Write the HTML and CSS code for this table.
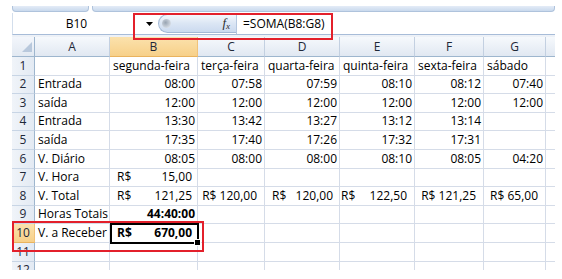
FILE: index.html
```html
<!DOCTYPE html>
<html lang="pt">
<head>
<meta charset="utf-8">
<title>Planilha</title>
<link rel="stylesheet" href="styles.css">
</head>
<body>
<div class="app">
  <div class="ribbon-edge"><div class="rtab rtab-1"></div><div class="rtab rtab-2"></div></div>
  <div class="formula-bar">
    <div class="name-box">B10</div>
    <div class="nb-drop"><svg width="7" height="4" viewBox="0 0 7 4"><path d="M0 0H7L3.5 4Z" fill="#000"/></svg></div>
    <div class="fx-pill"><span class="grip"></span><span class="fx"><i>f</i><sub>x</sub></span></div>
    <div class="formula">=SOMA(B8:G8)</div>
  </div>
  <div class="gap"></div>
  <div class="sheet">
    <div class="corner"><svg width="12" height="12" viewBox="0 0 12 12"><path d="M11 1V11H1Z" fill="#b8c8dc"/></svg></div>
    <div class="c h">A</div><div class="c h sel">B</div><div class="c h">C</div><div class="c h">D</div><div class="c h">E</div><div class="c h">F</div><div class="c h">G</div><div class="c h last"></div>

    <div class="c rh">1</div><div class="c"></div><div class="c">segunda-feira</div><div class="c">terça-feira</div><div class="c">quarta-feira</div><div class="c">quinta-feira</div><div class="c">sexta-feira</div><div class="c">sábado</div><div class="c last"></div>

    <div class="c rh">2</div><div class="c">Entrada</div><div class="c r">08:00</div><div class="c r">07:58</div><div class="c r">07:59</div><div class="c r">08:10</div><div class="c r">08:12</div><div class="c r">07:40</div><div class="c last"></div>

    <div class="c rh">3</div><div class="c">saída</div><div class="c r">12:00</div><div class="c r">12:00</div><div class="c r">12:00</div><div class="c r">12:00</div><div class="c r">12:00</div><div class="c r">12:00</div><div class="c last"></div>

    <div class="c rh">4</div><div class="c">Entrada</div><div class="c r">13:30</div><div class="c r">13:42</div><div class="c r">13:27</div><div class="c r">13:12</div><div class="c r">13:14</div><div class="c"></div><div class="c last"></div>

    <div class="c rh">5</div><div class="c">saída</div><div class="c r">17:35</div><div class="c r">17:40</div><div class="c r">17:26</div><div class="c r">17:32</div><div class="c r">17:31</div><div class="c"></div><div class="c last"></div>

    <div class="c rh">6</div><div class="c">V. Diário</div><div class="c r">08:05</div><div class="c r">08:00</div><div class="c r">08:00</div><div class="c r">08:10</div><div class="c r">08:05</div><div class="c r">04:20</div><div class="c last"></div>

    <div class="c rh">7</div><div class="c">V. Hora</div><div class="c acct"><span>R$</span><span>15,00</span></div><div class="c"></div><div class="c"></div><div class="c"></div><div class="c"></div><div class="c"></div><div class="c last"></div>

    <div class="c rh">8</div><div class="c">V. Total</div><div class="c acct"><span>R$</span><span>121,25</span></div><div class="c cur">R$ 120,00</div><div class="c acct acct-d"><span>R$</span><span>120,00</span></div><div class="c acct acct-e"><span>R$</span><span>122,50</span></div><div class="c cur">R$ 121,25</div><div class="c cur">R$ 65,00</div><div class="c last"></div>

    <div class="c rh">9</div><div class="c">Horas Totais</div><div class="c r b">44:40:00</div><div class="c"></div><div class="c"></div><div class="c"></div><div class="c"></div><div class="c"></div><div class="c last"></div>

    <div class="c rh sel">10</div><div class="c">V. a Receber</div><div class="c acct b active"><span>R$</span><span>670,00</span></div><div class="c"></div><div class="c"></div><div class="c"></div><div class="c"></div><div class="c"></div><div class="c last"></div>

    <div class="c rh">11</div><div class="c"></div><div class="c"></div><div class="c"></div><div class="c"></div><div class="c"></div><div class="c"></div><div class="c"></div><div class="c last"></div>

    <div class="c rh">12</div><div class="c"></div><div class="c"></div><div class="c"></div><div class="c"></div><div class="c"></div><div class="c"></div><div class="c"></div><div class="c last"></div>
  </div>
  <div class="hl hl-formula"></div>
  <div class="hl hl-row"></div>
</div>
</body>
</html>
```

FILE: styles.css
```css
body {
  margin: 0;
  background: #fff;
  font-family: "Open Sans", "Liberation Sans", sans-serif;
  font-size: 12px;
  color: #000;
}

.app {
  position: relative;
  margin-left: 12px;
  width: 543px;
}

.ribbon-edge {
  display: flex;
  height: 13px;
}

.rtab {
  margin-top: 6px;
  height: 5px;
  background: linear-gradient(#e4ecf7, #c9d9ed);
  border: 1px solid #afc3dc;
  border-top: 0;
  border-radius: 0 0 4px 4px;
}

.rtab-1 { width: 75px; }
.rtab-2 { flex: 1; margin-left: 3px; }

.formula-bar {
  display: flex;
  height: 22px;
  box-sizing: border-box;
  border-bottom: 1px solid #a7bcd8;
  border-left: 1px solid #d3deec;
  background: #fff;
}

.name-box {
  width: 127px;
  display: flex;
  align-items: center;
  justify-content: center;
}

.nb-drop {
  width: 18px;
  display: flex;
  align-items: center;
  justify-content: center;
}

.fx-pill {
  width: 78px;
  height: 19px;
  margin-top: 1px;
  box-sizing: border-box;
  border: 1px solid #a3b9d6;
  border-right: 0;
  border-radius: 10px 0 0 10px;
  background: linear-gradient(#f3f7fc, #dbe6f4 50%, #cbdaef);
  display: flex;
  align-items: center;
  justify-content: space-between;
  padding: 0 6px 0 3px;
}

.grip {
  width: 9px;
  height: 9px;
  border-radius: 50%;
  background: radial-gradient(circle at 40% 40%, #98a4b2, #c7cfd9 55%, #eef2f7);
}

.fx {
  font-family: "Liberation Serif", serif;
  font-size: 13px;
  color: #2b2b2b;
  line-height: 1;
}

.fx sub {
  font-size: 9px;
  font-style: italic;
  vertical-align: -2px;
}

.formula {
  flex: 1;
  border-left: 1px solid #b5c7df;
  padding-left: 6px;
  display: flex;
  align-items: center;
}

.gap {
  height: 2px;
  background: #edf1f7;
}

.sheet {
  display: grid;
  grid-template-columns: 23px 75px 88px 67px 75px 75px 69px 62px 9px;
  grid-template-rows: 20px repeat(12, 18.6px);
  height: 233px;
  overflow: hidden;
}

.c {
  box-sizing: border-box;
  border-right: 1px solid #d5dce8;
  border-bottom: 1px solid #d5dce8;
  display: flex;
  align-items: flex-end;
  padding: 0 2px 1px 3px;
  line-height: 16px;
  white-space: nowrap;
  overflow: hidden;
}

.c.last { border-right: 0; }

.corner {
  box-sizing: border-box;
  background: linear-gradient(#f3f6fb, #e2e9f2);
  border-right: 1px solid #9eb6ce;
  border-bottom: 1px solid #9eb6ce;
  display: flex;
  align-items: flex-end;
  justify-content: flex-end;
  padding: 0 1px 3px 0;
}

.h {
  background: linear-gradient(#f6f9fc, #e1e8f2);
  border-right-color: #c3d0e1;
  border-bottom-color: #9eb6ce;
  justify-content: center;
  align-items: center;
  padding: 0;
  color: #1e2838;
}

.rh {
  background: linear-gradient(90deg, #f0f4f9, #e3eaf3);
  border-right-color: #9eb6ce;
  border-bottom-color: #c8d5e5;
  justify-content: center;
  padding: 0 0 1px 0;
  color: #1e2838;
}

.sel {
  background: linear-gradient(#fbe2ad, #f7d089);
  border-right-color: #f0c27a;
  border-bottom-color: #e9b35e;
}

.r { justify-content: flex-end; }

.b { font-weight: 700; }

.acct {
  justify-content: space-between;
  padding: 0 5px 1px 7px;
}

.acct-d { padding-right: 6px; }
.acct-e { padding-left: 1px; padding-right: 7px; }

.cur {
  justify-content: flex-end;
  padding-right: 7px;
}

.active {
  position: relative;
  overflow: visible;
}

.active::before {
  content: "";
  position: absolute;
  top: -1px;
  left: 0;
  right: -2px;
  bottom: -2px;
  border: 2px solid #000;
}

.active::after {
  content: "";
  position: absolute;
  right: -4px;
  bottom: -4px;
  width: 5px;
  height: 5px;
  background: #000;
  border: 1px solid #fff;
}

.hl {
  position: absolute;
  box-sizing: border-box;
  border: 2px solid #e3202b;
  z-index: 3;
}

.hl-formula {
  left: 121px;
  top: 13px;
  width: 200px;
  height: 27px;
}

.hl-row {
  left: 0;
  top: 221px;
  width: 192px;
  height: 31px;
}
```
